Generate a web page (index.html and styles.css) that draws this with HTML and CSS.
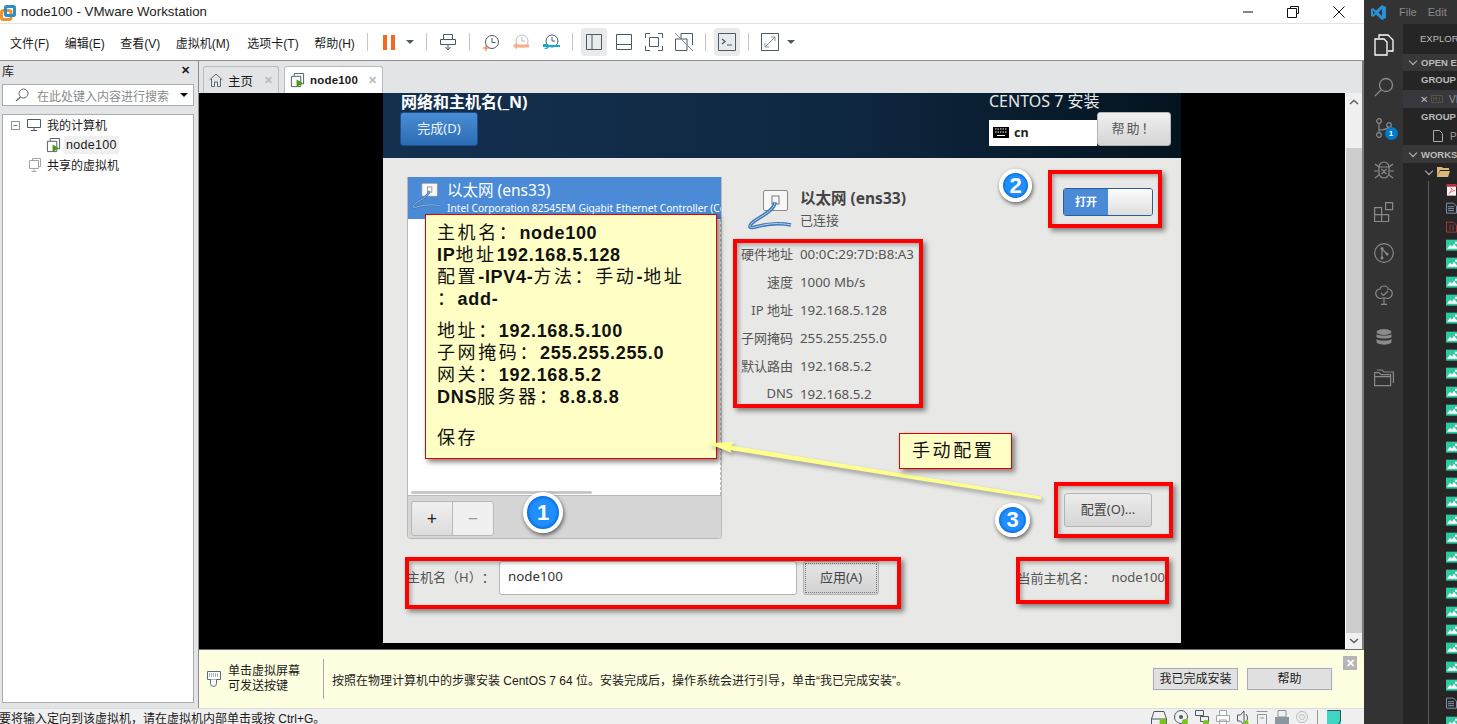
FILE: index.html
```html
<!DOCTYPE html>
<html lang="zh-CN">
<head>
    <meta charset="UTF-8">
    <title>node100 - VMware Workstation</title>
    <link rel="stylesheet" href="styles.css">
</head>
<body>
    <svg class="defs" xmlns="http://www.w3.org/2000/svg">
        <symbol id="eth" viewBox="0 0 46 43">
            <rect x="16.5" y="0.5" width="24" height="20" rx="1.5" fill="#f7f7f7" stroke="#8a8a8a"/>
            <rect x="25" y="6" width="7" height="8" fill="none" stroke="#777"/>
            <path d="M28 12C27 24 2 30 3 37C5 40 20 30 44 35" fill="none" stroke="#3f78b8" stroke-width="3.6"/>
            <path d="M28 12C27 24 2 30 3 37C5 40 20 30 44 35" fill="none" stroke="#b7d2ee" stroke-width="1"/>
        </symbol>
        <symbol id="vm" viewBox="0 0 16 16">
            <path d="M4.500 3V.5h10v11H12M1.500 3.500h10v11h-10z" fill="none" stroke="#4a5a66"/>
            <path d="M7 7v8l7-4z" fill="#4f9a12"/>
        </symbol>
        <symbol id="imgfile" viewBox="0 0 14 11">
            <rect width="14" height="11" fill="#2fc9a0"/>
            <path d="M1 9l3-4 2 2 2-3 4 5zM9 2h3v2H9z" fill="#fff"/>
        </symbol>
    </svg>

    <div class="vmware">
        <header class="titlebar">
            <svg class="app-logo" width="16" height="19" viewBox="0 0 16 19">
                <rect x="1.500" y="8.500" width="9.500" height="9" rx="2" fill="none" stroke="#f0922b" stroke-width="3"/>
                <rect x="5.500" y="4.500" width="9" height="9" rx="1" fill="none" stroke="#2b8fc4" stroke-width="3"/>
            </svg>
            <span class="app-title">node100 - VMware Workstation</span>
            <div class="win-btns">
                <svg width="12" height="12" viewBox="0 0 12 12"><path d="M2 6h10" stroke="#111"/></svg>
                <svg width="12" height="12" viewBox="0 0 12 12"><path d="M3.500 2.500v-2h8v7h-2M.5 2.500h9v9h-9z" fill="#fff" stroke="#111"/></svg>
                <svg width="12" height="12" viewBox="0 0 12 12"><path d="M.5.500l11 11M11.500.5l-11 11" stroke="#111"/></svg>
            </div>
        </header>

        <nav class="toolbar">
            <span class="menu">文件(F)</span>
            <span class="menu">编辑(E)</span>
            <span class="menu">查看(V)</span>
            <span class="menu">虚拟机(M)</span>
            <span class="menu">选项卡(T)</span>
            <span class="menu">帮助(H)</span>
            <i class="sep first"></i>
            <div class="tool"><svg width="14" height="17" viewBox="0 0 14 17"><path d="M1 1h4v15H1zM9 1h4v15H9z" fill="#f26a1f"/></svg></div>
            <i class="caret"></i>
            <i class="sep"></i>
            <div class="tool"><svg width="18" height="18" viewBox="0 0 18 18"><path d="M4.500 1.500h9v5h-9zM1.500 6.500h15v5h-15z" fill="#fff" stroke="#4a5a66"/><path d="M9 12v4M6.500 14l2.500 3 2.500-3" fill="none" stroke="#4a5a66"/></svg></div>
            <i class="sep"></i>
            <div class="tool"><svg width="17" height="17" viewBox="0 0 17 17"><circle cx="9" cy="8" r="6.500" fill="none" stroke="#4a5a66"/><path d="M9 4v4.500h3.500" fill="none" stroke="#4a5a66"/><path d="M0 14h6M3 11v6" stroke="#f26a1f"/></svg></div>
            <div class="tool"><svg width="17" height="17" viewBox="0 0 17 17"><circle cx="9" cy="7" r="6" fill="none" stroke="#b4bcc2"/><path d="M9 3v4h3" fill="none" stroke="#b4bcc2"/><path d="M0 11.500l4-3v2h12v3H4v2z" fill="#f9ab88"/></svg></div>
            <div class="tool"><svg width="17" height="17" viewBox="0 0 17 17"><circle cx="9" cy="7" r="6" fill="none" stroke="#4a5a66"/><path d="M9 3v4h3" fill="none" stroke="#4a5a66"/><path d="M0 10h4l2 1h11v2H6l-2 2H1l3-2H0z" fill="#12a9cf"/></svg></div>
            <i class="sep"></i>
            <div class="tool on"><svg width="16" height="16" viewBox="0 0 16 16"><path d="M.5.500h15v15H.5zM6 .5v15" fill="none" stroke="#4a5a66"/></svg></div>
            <div class="tool"><svg width="16" height="16" viewBox="0 0 16 16"><path d="M.5.500h15v15H.5zM.5 10.500h15" fill="none" stroke="#4a5a66"/></svg></div>
            <div class="tool"><svg width="18" height="18" viewBox="0 0 18 18"><path d="M.5 5V.5H5M13 .5h4.500V5M17.500 13v4.500H13M5 17.500H.5V13M4.500 4.500h9v9h-9z" fill="none" stroke="#4a5a66"/></svg></div>
            <div class="tool"><svg width="18" height="18" viewBox="0 0 18 18"><path d="M6 .5h11.500V12M12 17.500H.5V6M.5 6H12v11.500M6 .5V6" fill="none" stroke="#4a5a66"/><path d="M0 0l18 18" stroke="#7d8b95"/></svg></div>
            <i class="sep"></i>
            <div class="tool on"><svg width="18" height="18" viewBox="0 0 18 18"><path d="M.5.500h17v17H.5z" fill="none" stroke="#4a5a66"/><path d="M4 6l3 2.500L4 11" fill="none" stroke="#4a5a66" stroke-width="1.300"/><path d="M9 12h5" stroke="#4a5a66"/></svg></div>
            <i class="sep"></i>
            <div class="tool"><svg width="18" height="18" viewBox="0 0 18 18"><path d="M.5.500h17v17H.5z" fill="none" stroke="#4a5a66"/><path d="M4 14L14 4M10 4h4v4M4 10v4h4" fill="none" stroke="#8a959d"/></svg></div>
            <i class="caret"></i>
        </nav>

        <div class="main">
            <aside class="library">
                <div class="lib-head"><span>库</span><span class="lib-close">✕</span></div>
                <div class="lib-search">
                    <svg width="14" height="14" viewBox="0 0 14 14"><circle cx="8.500" cy="5.500" r="4.500" fill="none" stroke="#666"/><path d="M5.500 9L1 13" stroke="#666" stroke-width="1.300"/></svg>
                    <span class="lib-hint">在此处键入内容进行搜索</span>
                    <i class="caret dark"></i>
                </div>
                <div class="tree">
                    <div class="tree-row">
                        <span class="tree-box">−</span>
                        <svg width="14" height="12" viewBox="0 0 14 12"><path d="M.5.500h13v8H.5zM7 8.500v3M4 11.500h6" fill="none" stroke="#4a5a66"/></svg>
                        <span class="tree-label">我的计算机</span>
                    </div>
                    <div class="tree-row child">
                        <svg width="15" height="15"><use href="#vm"/></svg>
                        <span class="tree-sel">node100</span>
                    </div>
                    <div class="tree-row shared">
                        <svg width="12" height="14" viewBox="0 0 12 14"><path d="M3.500 2.500v-2h8v8h-2M.5 2.500h9v8h-9zM5 10.500v3M2.500 13.500h5" fill="#fff" stroke="#a0a7ac"/></svg>
                        <span class="tree-label">共享的虚拟机</span>
                    </div>
                </div>
            </aside>

            <section class="workspace">
                <div class="tabs">
                    <div class="tab">
                        <svg width="14" height="14" viewBox="0 0 14 14"><path d="M.5 7L7 1l6.500 6M2.500 6v7.500h3V9h3v4.500h3V6" fill="none" stroke="#5a6a76"/></svg>
                        <span>主页</span>
                        <span class="tab-x">✕</span>
                    </div>
                    <div class="tab active">
                        <svg width="15" height="15"><use href="#vm"/></svg>
                        <span>node100</span>
                        <span class="tab-x">✕</span>
                    </div>
                </div>

                <div class="console">
                    <div class="guest">
                        <div class="guest-head">
                            <div class="head-left">
                                <div class="spoke-title">网络和主机名(_N)</div>
                                <div class="btn-done">完成(D)</div>
                            </div>
                            <div class="head-right">
                                <div class="centos">CENTOS 7 安装</div>
                                <div class="head-row">
                                    <div class="layout-box">
                                        <svg width="16" height="11" viewBox="0 0 16 11"><rect width="16" height="11" fill="#000"/><path d="M2 2h12M2 5h12" stroke="#fff" stroke-dasharray="1.500 1"/><path d="M4 8.500h8" stroke="#fff"/></svg>
                                        <span>cn</span>
                                    </div>
                                    <div class="btn-help">帮助！</div>
                                </div>
                            </div>
                        </div>

                        <div class="guest-body">
                            <div class="net-panel">
                                <div class="conn-list">
                                    <div class="conn-sel">
                                        <svg width="30" height="28"><use href="#eth"/></svg>
                                        <div class="conn-text">
                                            <div class="conn-name">以太网 (ens33)</div>
                                            <div class="conn-sub">Intel Corporation 82545EM Gigabit Ethernet Controller (Copper)</div>
                                        </div>
                                    </div>
                                    <div class="conn-blank"><i class="hscroll"></i></div>
                                    <div class="conn-tools">
                                        <div class="pm plus">+</div>
                                        <div class="pm minus">−</div>
                                    </div>
                                </div>

                                <div class="detail">
                                    <div class="detail-top">
                                        <svg width="46" height="43"><use href="#eth"/></svg>
                                        <div class="detail-title">
                                            <div class="dev-name">以太网 (ens33)</div>
                                            <div class="dev-state">已连接</div>
                                        </div>
                                        <div class="switch"><span class="sw-on">打开</span><span class="sw-knob"></span></div>
                                    </div>
                                    <div class="props">
                                        <span>硬件地址</span><span>00:0C:29:7D:B8:A3</span>
                                        <span>速度</span><span>1000 Mb/s</span>
                                        <span>IP 地址</span><span>192.168.5.128</span>
                                        <span>子网掩码</span><span>255.255.255.0</span>
                                        <span>默认路由</span><span>192.168.5.2</span>
                                        <span>DNS</span><span>192.168.5.2</span>
                                    </div>
                                    <div class="btn-config">配置(O)...</div>
                                </div>
                            </div>

                            <div class="host-row">
                                <span class="host-label">主机名（H）：</span>
                                <div class="host-entry">node100</div>
                                <div class="btn-apply">应用(A)</div>
                                <div class="host-now"><span>当前主机名：</span><span>node100</span></div>
                            </div>
                        </div>

                        <!-- screenshot annotations -->
                        <i class="mark mark-props"></i>
                        <i class="mark mark-switch"></i>
                        <i class="mark mark-config"></i>
                        <i class="mark mark-host"></i>
                        <i class="mark mark-now"></i>
                        <div class="note">
                            <div>主机名：<b>node100</b></div>
                            <div><b>IP</b>地址<b>192.168.5.128</b></div>
                            <div>配置<b>-IPV4-</b>方法：手动<b>-</b>地址</div>
                            <div>：<b>add-</b></div>
                            <div class="note-gap">地址：<b>192.168.5.100</b></div>
                            <div>子网掩码：<b>255.255.255.0</b></div>
                            <div>网关：<b>192.168.5.2</b></div>
                            <div><b>DNS</b>服务器：<b>8.8.8.8</b></div>
                            <div class="note-save">保存</div>
                        </div>
                        <svg class="arrow" width="798" height="550" viewBox="0 0 798 550">
                            <path d="M324 350L351 349L348 352.500L658 403.500V406.500L347 357L349 360z" fill="#ffff8c"/>
                        </svg>
                        <div class="note-small">手动配置</div>
                        <div class="badge badge-1">1</div>
                        <div class="badge badge-2">2</div>
                        <div class="badge badge-3">3</div>
                    </div>
                    <div class="vscroll">
                        <div class="vs-arrow">
                            <svg width="10" height="6" viewBox="0 0 10 6"><path d="M1 5l4-3.500L9 5" fill="none" stroke="#606060" stroke-width="1.600"/></svg>
                        </div>
                        <div class="vs-thumb"></div>
                        <div class="vs-arrow down">
                            <svg width="10" height="6" viewBox="0 0 10 6"><path d="M1 1l4 3.500L9 1" fill="none" stroke="#606060" stroke-width="1.600"/></svg>
                        </div>
                    </div>
                </div>

                <div class="notify">
                    <svg width="14" height="16" viewBox="0 0 14 16"><path d="M.5.500h13v8H.5z" fill="#fff" stroke="#5a6a76"/><path d="M2 3h10M2 5h10" stroke="#5a6a76" stroke-dasharray="1 1"/><path d="M3.500 8.500v4a3 3 0 0 0 6 0v-4" fill="#fff" stroke="#5a6a76"/></svg>
                    <div class="notify-hint">单击虚拟屏幕<br>可发送按键</div>
                    <i class="notify-sep"></i>
                    <div class="notify-text">按照在物理计算机中的步骤安装 CentOS 7 64 位。安装完成后，操作系统会进行引导，单击“我已完成安装”。</div>
                    <div class="notify-btn">我已完成安装</div>
                    <div class="notify-btn">帮助</div>
                    <span class="notify-close">✕</span>
                </div>
            </section>
        </div>

        <footer class="statusbar">
            <span class="status-text">要将输入定向到该虚拟机，请在虚拟机内部单击或按 Ctrl+G。</span>
            <div class="status-icons">
                <svg width="16" height="16" viewBox="0 0 16 16"><path d="M.5 9L3 1.500h10L15.500 9v6H.5zM.5 9h15" fill="none" stroke="#4a5a66"/><circle cx="12" cy="12" r="3.500" fill="#7cc21e"/></svg>
                <svg width="14" height="16" viewBox="0 0 14 16"><circle cx="7" cy="7" r="6.500" fill="none" stroke="#4a5a66"/><circle cx="7" cy="7" r="2" fill="#4a5a66"/><circle cx="11" cy="12" r="3" fill="#7cc21e"/></svg>
                <svg width="14" height="16" viewBox="0 0 14 16"><path d="M.5.500h8v5h-8zM5.500 6.500h8v5h-8z" fill="none" stroke="#4a5a66"/><circle cx="11" cy="13" r="3" fill="#7cc21e"/></svg>
                <svg width="14" height="16" viewBox="0 0 14 16"><path d="M3.500 5V.5h7V5M.5 5.500h13v6h-13zM3.500 10h7v5.500h-7z" fill="#fff" stroke="#a0a7ac"/></svg>
                <svg width="12" height="16" viewBox="0 0 12 16"><path d="M.5 5h3L7 1v14l-3.500-4h-3zM9 4c2 2 2 6 0 8" fill="none" stroke="#4a5a66"/><circle cx="9" cy="13" r="2.500" fill="#7cc21e"/></svg>
                <svg width="12" height="16" viewBox="0 0 12 16"><path d="M.5 1.500h11M1.500 4.500h9V15h-9zM4 8h4" fill="none" stroke="#8a959d"/></svg>
                <svg width="14" height="16" viewBox="0 0 14 16"><path d="M3 .5h8V7H3z" fill="none" stroke="#8a959d"/><path d="M0 7h14v9H0z" fill="#8a959d"/></svg>
                <svg width="12" height="16" viewBox="0 0 12 16"><circle cx="6" cy="7" r="5.500" fill="none" stroke="#b4bcc2"/><circle cx="6" cy="7" r="2.500" fill="none" stroke="#b4bcc2"/></svg>
                <i class="status-sep"></i>
                <svg width="14" height="16" viewBox="0 0 14 16"><path d="M0 0h14v16H0z" fill="#3fd6c4"/><path d="M.5.500h13V11l-3 4.500H.5" fill="none" stroke="#33505c"/></svg>
            </div>
        </footer>
    </div>

    <div class="vscode">
        <div class="vs-title">
            <svg width="15" height="15" viewBox="0 0 15 15"><path d="M11 0l4 2v11l-4 2-6-5.500L2 12 0 11V4l2-1 3 2.500zM11 4L7.500 7.500 11 11zM2 5.500v4l2-2z" fill="#2b8fd6"/></svg>
            <span class="vs-file">File</span>
            <span>Edit</span>
        </div>
        <div class="vs-main">
            <div class="activity">
                <svg width="20" height="22" viewBox="0 0 20 22"><path d="M5 4V1h9l5 5v11h-5M1 5h9l3 3v13H1z" fill="none" stroke="#fff" stroke-width="1.300"/></svg>
                <svg width="20" height="20" viewBox="0 0 20 20"><circle cx="12" cy="8" r="6.500" fill="none" stroke="#8a8a8a" stroke-width="1.300"/><path d="M7 13L1 19" stroke="#8a8a8a" stroke-width="1.300"/></svg>
                <div class="act-git">
                    <svg width="16" height="20" viewBox="0 0 16 20"><circle cx="3" cy="3" r="2.300" fill="none" stroke="#8a8a8a" stroke-width="1.200"/><circle cx="3" cy="17" r="2.300" fill="none" stroke="#8a8a8a" stroke-width="1.200"/><circle cx="13" cy="7" r="2.300" fill="none" stroke="#8a8a8a" stroke-width="1.200"/><path d="M3 5.500v9M3 12c6 0 9-2 10-3" fill="none" stroke="#8a8a8a" stroke-width="1.200"/></svg>
                    <span class="act-badge">1</span>
                </div>
                <svg width="20" height="20" viewBox="0 0 20 20"><path d="M10 2a5 5 0 0 1 5 5v6a5 5 0 0 1-10 0V7a5 5 0 0 1 5-5zM5 7h10M1 4l4 3M19 4l-4 3M0 11h5M20 11h-5M1 18l4-3M19 18l-4-3M7.500 9l5 5M12.500 9l-5 5" fill="none" stroke="#8a8a8a" stroke-width="1.200"/></svg>
                <svg width="20" height="20" viewBox="0 0 20 20"><path d="M.6 5.600h7v7h-7zM.6 12.600h7v7h-7zM7.600 12.600h7v7h-7zM11.600.6h7v7h-7z" fill="none" stroke="#8a8a8a" stroke-width="1.200"/></svg>
                <svg width="20" height="20" viewBox="0 0 20 20"><circle cx="10" cy="10" r="9.300" fill="none" stroke="#8a8a8a" stroke-width="1.200"/><path d="M8 5v11M8 6l5 5" fill="none" stroke="#8a8a8a" stroke-width="1.200"/><circle cx="8" cy="5.500" r="1.500" fill="#8a8a8a"/><circle cx="13" cy="11" r="1.500" fill="#8a8a8a"/><circle cx="8" cy="15" r="1.500" fill="#8a8a8a"/></svg>
                <svg width="20" height="20" viewBox="0 0 20 20"><path d="M10 1c3 0 4 2 4 3 3 0 5 3 4 6s-4 4-6 3H8c-2 1-5 0-6-3s1-6 4-6c0-1 1-3 4-3zM10 13v6M7 19.300h6M7 8l2.500 2.500L14 6" fill="none" stroke="#8a8a8a" stroke-width="1.200"/></svg>
                <svg width="16" height="16" viewBox="0 0 16 16"><ellipse cx="8" cy="3" rx="7.500" ry="3" fill="#8a8a8a"/><path d="M.5 5c1 2 14 2 15 0v3c-1 2-14 2-15 0zM.5 10c1 2 14 2 15 0v3c-1 3.500-14 3.500-15 0z" fill="#8a8a8a"/></svg>
                <svg width="20" height="18" viewBox="0 0 20 18"><path d="M.6 3.600v13h16v-11H7l-2-2zM.6 7.600h16M3 1h5l2 2h9.400v11" fill="none" stroke="#8a8a8a" stroke-width="1.200"/></svg>
            </div>
            <div class="sidebar">
                <div class="side-head">EXPLORER: WORKSPACE</div>
                <div class="side-section"><i class="chev"></i>OPEN EDITORS</div>
                <div class="side-group">GROUP 1</div>
                <div class="side-file sel">
                    <span class="file-x">✕</span>
                    <svg width="12" height="8" viewBox="0 0 12 8"><path d="M.5.500h11v7H.5z" fill="none" stroke="#5c5040"/><path d="M2.500 6V2l1.500 2 1.500-2v4M8.500 2v4" fill="none" stroke="#5c5040"/></svg>
                    <span class="file-name">VMware.md</span>
                </div>
                <div class="side-group">GROUP 2</div>
                <div class="side-file">
                    <svg class="plain-file" width="10" height="12" viewBox="0 0 10 12"><path d="M.5.500h6l3 3v8h-9z" fill="none" stroke="#aaa"/></svg>
                    <span class="file-name">Preview</span>
                </div>
                <div class="side-section"><i class="chev"></i>WORKSPACE</div>
                <div class="side-tree">
                    <div class="folder-row">
                        <i class="chev"></i>
                        <svg width="13" height="10" viewBox="0 0 13 10"><path d="M0 2V0h5l1 1h6v2H3L0 10zM3 4h10l-2 6H0z" fill="#dcb67a"/></svg>
                    </div>
                    <div class="files">
                        <svg width="11" height="11" viewBox="0 0 11 11"><path d="M1 0h9v11H1z" fill="#f5f5f5"/><path d="M0 0h11v2H0z" fill="#c8242b"/><path d="M3 9c2-2 3-4 2-6 1 2 2 3 4 3-2 0-4 1-6 3z" fill="none" stroke="#e8564f" stroke-width=".7"/></svg>
                        <svg width="11" height="11" viewBox="0 0 11 11"><path d="M.5.500h7l3 3v7h-10zM2 4h6M2 6h6M2 8h6" fill="none" stroke="#8090a8"/></svg>
                        <svg width="11" height="11" viewBox="0 0 11 11"><path d="M.5.500h7l3 3v7h-10zM4 3v6M7 3v6" fill="none" stroke="#a03a3a"/></svg>
                        <svg width="14" height="11"><use href="#imgfile"/></svg>
                        <svg width="14" height="11"><use href="#imgfile"/></svg>
                        <svg width="14" height="11"><use href="#imgfile"/></svg>
                        <svg width="14" height="11"><use href="#imgfile"/></svg>
                        <svg width="14" height="11"><use href="#imgfile"/></svg>
                        <svg width="14" height="11"><use href="#imgfile"/></svg>
                        <svg width="14" height="11"><use href="#imgfile"/></svg>
                        <svg width="14" height="11"><use href="#imgfile"/></svg>
                        <svg width="14" height="11"><use href="#imgfile"/></svg>
                        <svg width="14" height="11"><use href="#imgfile"/></svg>
                        <svg width="14" height="11"><use href="#imgfile"/></svg>
                        <svg width="14" height="11"><use href="#imgfile"/></svg>
                        <svg width="14" height="11"><use href="#imgfile"/></svg>
                        <svg width="14" height="11"><use href="#imgfile"/></svg>
                        <svg width="14" height="11"><use href="#imgfile"/></svg>
                        <svg width="14" height="11"><use href="#imgfile"/></svg>
                        <svg width="14" height="11"><use href="#imgfile"/></svg>
                        <svg width="14" height="11"><use href="#imgfile"/></svg>
                        <svg width="14" height="11"><use href="#imgfile"/></svg>
                        <svg width="14" height="11"><use href="#imgfile"/></svg>
                        <svg width="14" height="11"><use href="#imgfile"/></svg>
                        <svg width="14" height="11"><use href="#imgfile"/></svg>
                        <svg width="14" height="11"><use href="#imgfile"/></svg>
                        <svg width="14" height="11"><use href="#imgfile"/></svg>
                        <svg width="14" height="11"><use href="#imgfile"/></svg>
                        <svg width="11" height="11" viewBox="0 0 11 11"><path d="M.5.500h7l3 3v7h-10zM2 4h6M2 6h6M2 8h6" fill="none" stroke="#8090a8"/></svg>
                        <svg width="14" height="11"><use href="#imgfile"/></svg>
                    </div>
                </div>
            </div>
        </div>
    </div>
</body>
</html>
```

FILE: styles.css
```css
* {
    margin: 0;
    padding: 0;
    box-sizing: border-box;
    text-spacing-trim: space-all;
}

html, body {
    height: 100%;
    overflow: hidden;
}

body {
    display: flex;
    font-family: "Liberation Sans", "Noto Sans CJK SC", sans-serif;
    font-size: 12px;
    color: #1a1a1a;
    background: #fff;
}

.defs {
    position: absolute;
    width: 0;
    height: 0;
}

i {
    display: block;
    flex: none;
}

svg {
    display: block;
    flex: none;
}

/* vmware window */
.vmware {
    width: 1364px;
    height: 724px;
    display: flex;
    flex-direction: column;
    flex: none;
}

.titlebar {
    height: 24px;
    display: flex;
    align-items: center;
    border-bottom: 1px solid #e3e3e3;
}

.app-title {
    margin-left: 5px;
    font-size: 13.3px;
    color: #222;
}

.win-btns {
    margin-left: auto;
    display: flex;
    gap: 34px;
    padding-right: 19px;
}

.toolbar {
    height: 37px;
    display: flex;
    align-items: center;
    padding-left: 10px;
    border-bottom: 1px solid #8f8f8f;
}

.menu {
    margin-right: 15.5px;
    font-size: 12px;
    white-space: nowrap;
}

.menu:nth-child(5) {
    margin-left: 2px;
}

.sep {
    width: 1px;
    height: 18px;
    background: #c4c4c4;
    margin: 0 6px;
}

.sep.first {
    margin-left: -3px;
}

.tool {
    width: 26px;
    height: 28px;
    margin: 0 2px;
    display: flex;
    align-items: center;
    justify-content: center;
    border-radius: 3px;
}

.tool.on {
    background: #e8eaec;
}

.caret {
    width: 8px;
    height: 0;
    margin: 0 6px 0 2px;
    border-left: 4px solid transparent;
    border-right: 4px solid transparent;
    border-top: 4px solid #4a5a66;
}

.caret.dark {
    margin: 0 0 0 auto;
    border-top-color: #111;
}

.main {
    height: 647px;
    display: flex;
}

/* library */
.library {
    width: 199px;
    flex: none;
    background: #e3e4e6;
    border-right: 1px solid #8c8c8c;
    padding: 0 4px 5px 2px;
    display: flex;
    flex-direction: column;
}

.lib-head {
    height: 23px;
    display: flex;
    align-items: center;
    justify-content: space-between;
    font-size: 12px;
    padding: 0 4px 4px 0;
}

.lib-close {
    font-size: 11px;
    font-weight: bold;
}

.lib-search {
    height: 22px;
    background: #fff;
    border: 1px solid #a9adb0;
    display: flex;
    align-items: center;
    padding: 0 5px 0 12px;
    gap: 8px;
}

.lib-hint {
    color: #8a8a8a;
    font-size: 12px;
    white-space: nowrap;
}

.tree {
    flex: 1;
    margin-top: 8px;
    background: #fff;
    border: 1px solid #a9adb0;
}

.tree-row {
    height: 20px;
    display: flex;
    align-items: center;
    gap: 6px;
    padding-left: 8px;
}

.tree-label {
    margin-top: -2px;
}

.tree-box {
    width: 9px;
    height: 9px;
    border: 1px solid #8a959d;
    font-size: 8px;
    line-height: 7px;
    text-align: center;
    margin-right: 1px;
}

.tree-row.child {
    padding-left: 43px;
    gap: 3px;
}

.tree-sel {
    background: #f0f0f0;
    padding: 2px 2px;
    letter-spacing: .3px;
    font-size: 12.5px;
}

.tree-row.shared {
    padding-left: 26px;
    gap: 6px;
}

/* tabs */
.workspace {
    flex: 1;
    min-width: 0;
    display: flex;
    flex-direction: column;
}

.tabs {
    height: 32px;
    flex: none;
    background: #e3e4e6;
    border-right: 2px solid #7c7c7c;
    display: flex;
    align-items: flex-end;
    padding-left: 4px;
    gap: 5px;
}

.tab {
    width: 76px;
    height: 27px;
    display: flex;
    align-items: center;
    gap: 5px;
    padding-left: 5px;
    border: 1px solid #b9bcbf;
    border-bottom: none;
    border-radius: 3px 3px 0 0;
    font-size: 12.5px;
}

.tab.active {
    width: 99px;
    background: #fff;
    font-weight: bold;
    font-size: 11.5px;
    letter-spacing: .2px;
}

.tab-x {
    margin-left: auto;
    margin-right: 5px;
    font-size: 11px;
    font-weight: bold;
    color: #b8bcbf;
}

/* guest screen */
.console {
    height: 556px;
    flex: none;
    background: #000;
    border-right: 2px solid #7c7c7c;
    display: flex;
    padding-left: 184px;
}

.guest {
    width: 798px;
    height: 550px;
    flex: none;
    position: relative;
    background: #e8e8e7;
    font-family: "Noto Sans", "Noto Sans CJK SC", sans-serif;
    display: flex;
    flex-direction: column;
}

.guest-head {
    height: 65px;
    flex: none;
    display: flex;
    justify-content: space-between;
    padding: 0 10px 0 18px;
    background: linear-gradient(90deg, #14304f 0%, #0f2842 55%, #04141f 100%);
    color: #fff;
}

.spoke-title {
    height: 19px;
    font-size: 16px;
    font-weight: bold;
    line-height: 18px;
    white-space: nowrap;
}

.btn-done {
    width: 78px;
    height: 34px;
    margin-left: -1px;
    border: 1px solid #1d4f8e;
    border-radius: 3px;
    background: linear-gradient(#4a8dd4, #2c6cb4);
    font-size: 13px;
    line-height: 30px;
    text-align: center;
    color: #eef4fb;
}

.centos {
    height: 19px;
    font-size: 16px;
    line-height: 16px;
    color: #e8e8e8;
    white-space: nowrap;
}

.head-row {
    display: flex;
    align-items: flex-end;
}

.layout-box {
    width: 108px;
    height: 26px;
    margin-top: 8px;
    background: #fff;
    color: #222;
    display: flex;
    align-items: center;
    gap: 5px;
    padding: 0 0 2px 4px;
    font-size: 12.5px;
    font-weight: bold;
}

.btn-help {
    width: 74px;
    height: 34px;
    border: 1px solid #b4b4b4;
    border-radius: 3px;
    background: linear-gradient(#efefef, #d5d5d5);
    color: #555;
    font-family: "Noto Sans CJK SC", sans-serif;
    font-size: 13px;
    letter-spacing: 2px;
    line-height: 30px;
    text-align: center;
    white-space: nowrap;
}

.guest-body {
    flex: 1;
    padding: 19px 16px 0 24px;
}

.net-panel {
    height: 362px;
    display: flex;
}

.conn-list {
    width: 315px;
    flex: none;
    display: flex;
    flex-direction: column;
    border: 1px solid #b8b8b8;
    border-top: none;
    border-radius: 0 0 4px 4px;
    background: #fff;
    overflow: hidden;
}

.conn-sel {
    height: 42px;
    flex: none;
    background: #4a8ad6;
    color: #fff;
    display: flex;
    padding: 5px 0 0 3px;
    gap: 6px;
    overflow: hidden;
}

.conn-sel svg {
    margin-top: 1px;
}

.conn-text {
    min-width: 0;
    white-space: nowrap;
}

.conn-name {
    font-size: 15.5px;
    line-height: 16px;
}

.conn-sub {
    font-size: 10.2px;
    line-height: 14px;
    margin-top: 3px;
}

.conn-blank {
    flex: 1;
    position: relative;
    border-right: 1px dashed #bbb;
}

.hscroll {
    position: absolute;
    left: 3px;
    bottom: 1px;
    width: 181px;
    height: 3px;
    background: #c8c8c8;
    border-radius: 2px;
}

.conn-tools {
    height: 43px;
    flex: none;
    background: #d6d6d6;
    border-top: 1px solid #b8b8b8;
    display: flex;
    padding: 5px 0 0 3px;
}

.pm {
    width: 42px;
    height: 35px;
    border: 1px solid #b8b8b8;
    font-size: 18px;
    line-height: 32px;
    text-align: center;
}

.plus {
    background: linear-gradient(#f0f0f0, #dcdcdc);
    border-radius: 3px 0 0 3px;
    color: #222;
}

.minus {
    margin-left: -1px;
    background: #f0f0f0;
    border-radius: 0 3px 3px 0;
    color: #999;
}

.detail {
    flex: 1;
    display: flex;
    flex-direction: column;
    margin-left: 13px;
    padding-bottom: 12px;
    color: #555;
}

.detail-top {
    display: flex;
    margin-top: 13px;
    padding-left: 12px;
    gap: 7px;
    height: 45px;
}

.detail-title {
    margin-top: -1px;
}

.dev-name {
    font-size: 15.5px;
    font-weight: bold;
    line-height: 18px;
    color: #444;
}

.dev-state {
    margin-top: 5px;
    font-size: 13px;
    line-height: 16px;
}

.switch {
    width: 90px;
    height: 28px;
    margin: -2px 12px 0 auto;
    display: flex;
    border: 1px solid #2a5f9e;
    border-radius: 3px;
    overflow: hidden;
}

.sw-on {
    width: 44px;
    background: #4a8ad6;
    color: #fff;
    font-size: 11px;
    font-weight: bold;
    line-height: 26px;
    text-align: center;
}

.sw-knob {
    flex: 1;
    background: linear-gradient(#fdfdfd, #dedede);
}

.props {
    display: grid;
    grid-template-columns: 58px auto;
    grid-auto-rows: 28px;
    column-gap: 7px;
    justify-content: start;
    align-items: center;
    margin-top: 5px;
    font-size: 13.3px;
}

.props span:nth-child(odd) {
    font-size: 13px;
    margin-top: -2px;
    text-align: right;
    white-space: nowrap;
    justify-self: end;
}

.btn-config {
    width: 88px;
    height: 34px;
    margin: auto 13px 0 auto;
    border: 1px solid #b4b4b4;
    border-radius: 3px;
    background: linear-gradient(#ececec, #d6d6d6);
    font-size: 13px;
    line-height: 31px;
    text-align: center;
    color: #444;
}

.host-row {
    height: 34px;
    margin-top: 22px;
    display: flex;
    align-items: center;
    font-size: 13px;
    color: #555;
}

.host-label {
    width: 92px;
    flex: none;
    margin-top: -3px;
    white-space: nowrap;
}

.host-entry {
    width: 298px;
    height: 34px;
    background: #fff;
    border: 1px solid #b4b4b4;
    border-radius: 3px;
    padding-left: 8px;
    line-height: 29px;
    color: #333;
    font-size: 13.3px;
}

.btn-apply {
    width: 76px;
    height: 34px;
    margin-left: 6px;
    border: 1px solid #b4b4b4;
    outline: 1px dotted #777;
    outline-offset: -3px;
    border-radius: 3px;
    background: linear-gradient(#e6e6e6, #d2d2d2);
    line-height: 30px;
    text-align: center;
    color: #444;
}

.host-now {
    margin: -2px 0 0 auto;
    display: flex;
    gap: 16px;
    white-space: nowrap;
}

/* annotations on top of the guest screen */
.mark {
    position: absolute;
    border: 4px solid #f00;
    box-shadow: 3px 3px 5px rgba(0, 0, 0, .45), inset 2px 2px 4px rgba(0, 0, 0, .3);
}

.mark-props { left: 350px; top: 146px; width: 190px; height: 169px; }
.mark-switch { left: 665px; top: 77px; width: 114px; height: 58px; }
.mark-config { left: 671px; top: 389px; width: 119px; height: 56px; }
.mark-host { left: 22px; top: 464px; width: 496px; height: 52px; }
.mark-now { left: 633px; top: 464px; width: 153px; height: 47px; }

.arrow {
    position: absolute;
    left: 0;
    top: 0;
    pointer-events: none;
    filter: drop-shadow(2px 3px 2px rgba(0, 0, 0, .35));
}

.note {
    position: absolute;
    left: 42px;
    top: 121px;
    width: 292px;
    height: 245px;
    padding: 7px 0 0 11px;
    background: #ffffc5;
    border: 1px solid #e80000;
    box-shadow: 3px 3px 5px rgba(0, 0, 0, .5);
    font-family: "Liberation Sans", "Noto Sans CJK SC", sans-serif;
    font-size: 18px;
    line-height: 22px;
    letter-spacing: 2.6px;
    color: #111;
    white-space: nowrap;
}

.note b {
    letter-spacing: .7px;
}

.note-gap {
    margin-top: 10px;
}

.note-save {
    margin-top: 19px;
}

.note-small {
    position: absolute;
    left: 516px;
    top: 340px;
    width: 113px;
    height: 36px;
    background: #ffffc5;
    border: 1px solid #e80000;
    box-shadow: 3px 3px 5px rgba(0, 0, 0, .45);
    font-family: "Liberation Sans", "Noto Sans CJK SC", sans-serif;
    font-size: 18px;
    line-height: 34px;
    letter-spacing: 2.6px;
    padding-left: 12px;
    color: #111;
}

.badge {
    position: absolute;
    border-radius: 50%;
    background: radial-gradient(#1f8fff 55%, #0a6de0 70%);
    border: 4px solid #fff;
    box-shadow: 1px 2px 4px rgba(0, 0, 0, .6);
    color: #fff;
    font-family: "Liberation Sans", sans-serif;
    font-weight: bold;
    font-size: 22px;
    text-align: center;
}

.badge-1 { left: 140px; top: 399px; width: 40px; height: 41px; line-height: 33px; }
.badge-2 { left: 616px; top: 76px; width: 33px; height: 33px; line-height: 25px; }
.badge-3 { left: 612px; top: 410px; width: 35px; height: 34px; line-height: 26px; }

.vscroll {
    width: 17px;
    flex: none;
    margin-left: auto;
    background: #f0f0f0;
    border-left: 1px solid #fff;
    display: flex;
    flex-direction: column;
}

.vs-arrow {
    height: 55px;
    flex: none;
    padding-top: 6px;
    display: flex;
    justify-content: center;
}

.vs-arrow.down {
    height: 16px;
    padding-top: 5px;
}

.vs-thumb {
    flex: 1;
    background: #cdcdcd;
}

/* notification bar */
.notify {
    height: 59px;
    flex: none;
    border-top: 1px solid #6b6b6b;
    background: #fefee0;
    display: flex;
    align-items: center;
    position: relative;
    padding-left: 8px;
    font-size: 12px;
}

.notify-hint {
    margin-left: 7px;
    line-height: 15px;
    width: 95px;
}

.notify-sep {
    width: 1px;
    height: 40px;
    background: #a8a8a8;
}

.notify-text {
    margin-left: 8px;
    flex: 1;
    white-space: nowrap;
}

.notify-btn {
    width: 85px;
    height: 22px;
    margin-right: 9px;
    background: #e1e1e1;
    border: 1px solid #adadad;
    outline: 1px solid #f5f5f5;
    line-height: 20px;
    text-align: center;
}

.notify-btn:last-of-type {
    margin-right: 32px;
}

.notify-close {
    position: absolute;
    right: 7px;
    top: 6px;
    width: 14px;
    height: 14px;
    background: #b5b5b5;
    color: #fff;
    font-size: 11px;
    font-weight: bold;
    line-height: 14px;
    text-align: center;
}

/* status bar */
.statusbar {
    height: 16px;
    flex: none;
    background: #f0f0f0;
    border-top: 1px solid #dcdcdc;
    display: flex;
    align-items: flex-start;
    overflow: hidden;
}

.status-text {
    font-size: 12px;
    line-height: 20px;
    margin-left: -1px;
    white-space: nowrap;
}

.status-icons {
    margin-left: auto;
    margin-right: 23px;
    display: flex;
    gap: 7px;
    padding-top: 1px;
}

.status-sep {
    width: 1px;
    height: 15px;
    background: #999;
    margin: 0 2px;
}

/* vscode window behind */
.vscode {
    flex: 1;
    min-width: 0;
    height: 724px;
    display: flex;
    flex-direction: column;
    background: #252526;
    color: #bbb;
    font-size: 10px;
    overflow: hidden;
}

.vs-title {
    height: 24px;
    flex: none;
    background: #333334;
    display: flex;
    align-items: center;
    padding-left: 7px;
    gap: 11px;
    color: #8a8a8a;
    font-size: 11px;
}

.vs-file {
    margin-left: 2px;
}

.vs-main {
    flex: 1;
    display: flex;
    min-height: 0;
}

.activity {
    width: 39px;
    flex: none;
    background: #333334;
    display: grid;
    grid-auto-rows: 41.7px;
    justify-items: center;
    align-items: center;
    align-content: start;
}

.act-git {
    position: relative;
}

.act-badge {
    position: absolute;
    left: 9px;
    top: 9px;
    width: 13px;
    height: 13px;
    border-radius: 50%;
    background: #007acc;
    color: #fff;
    font-size: 8px;
    font-weight: bold;
    line-height: 13px;
    text-align: center;
}

.sidebar {
    flex: 1;
    min-width: 0;
    white-space: nowrap;
    overflow: hidden;
}

.side-head {
    height: 30px;
    line-height: 29px;
    padding-left: 17px;
    font-size: 9.5px;
}

.side-section {
    height: 18px;
    background: #383838;
    display: flex;
    align-items: center;
    gap: 4px;
    padding-left: 5px;
    font-size: 9.5px;
    font-weight: bold;
}

.side-head + .side-section {
    height: 17px;
}

.chev {
    width: 6px;
    height: 6px;
    margin: -3px 1px 0 2px;
    border-right: 1px solid #bbb;
    border-bottom: 1px solid #bbb;
    transform: rotate(45deg);
}

.side-group {
    height: 19px;
    padding: 0 0 0 18px;
    line-height: 18px;
    font-weight: bold;
    font-size: 9.5px;
}

.side-file {
    height: 18px;
    display: flex;
    align-items: center;
    padding-left: 17px;
    gap: 3px;
}

.side-file.sel {
    background: #37373d;
}

.file-x {
    font-size: 10px;
}

.side-file.sel .file-name {
    margin-left: 3px;
}

.file-name {
    font-size: 10px;
    color: #999;
}

.plain-file {
    margin-left: 13px;
    margin-right: 4px;
}

.folder-row {
    height: 18px;
    display: flex;
    align-items: center;
    gap: 4px;
    padding-left: 21px;
}

.files {
    border-left: 1px solid #5a5a5a;
    margin-left: 25px;
    padding-left: 17px;
    display: flex;
    flex-direction: column;
}

.files svg {
    height: 18.33px;
}
```
